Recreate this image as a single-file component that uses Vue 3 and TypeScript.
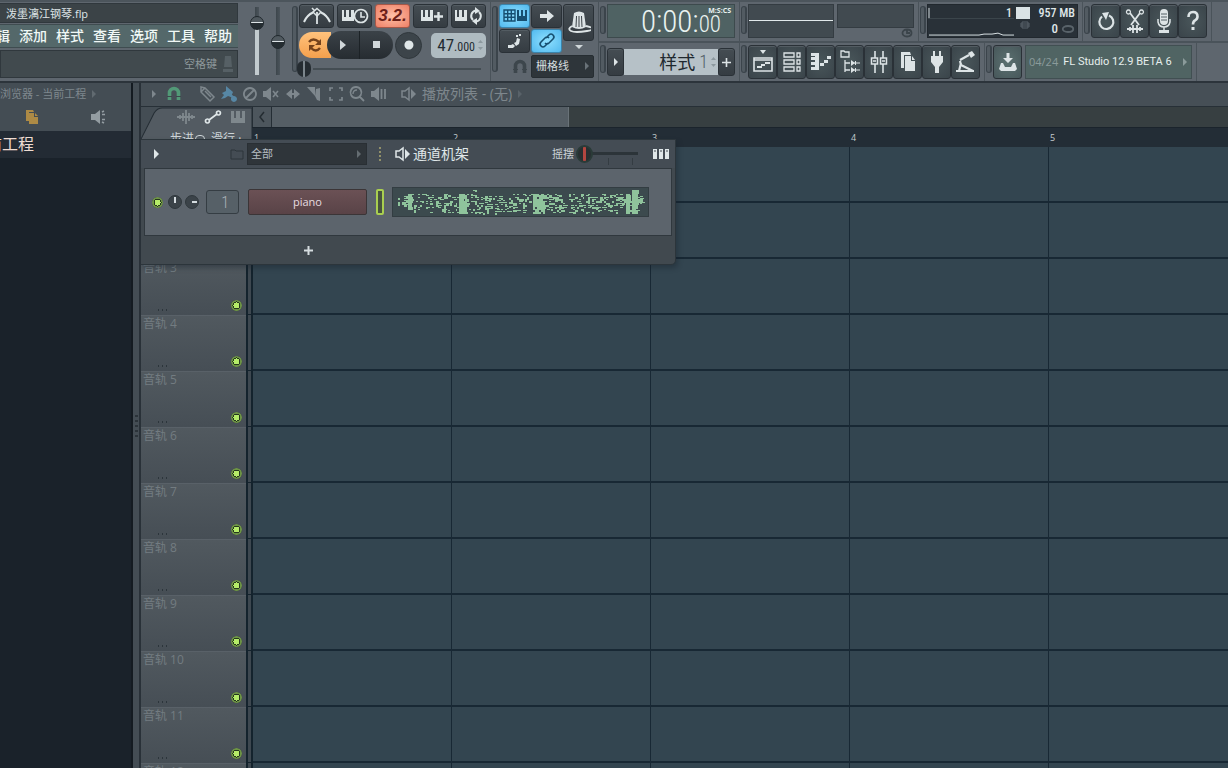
<script setup lang="ts">
import { computed, h, ref } from 'vue'

type Part = { d: string; w?: number; c?: string }
type IconDef = { s: [number, number]; p: Part[] }

const icons: Record<string, IconDef> = {
  metronome: { s: [30, 18], p: [{ d: 'M2 15Q5 8 11 5.500M28 15Q25 8 19 5.500', w: 2 }, { d: 'M15 5v12', w: 1.8 }, { d: 'M15 1.500l4 3.500-4 4-4-4z', w: 1.5 }, { d: 'M10 1l3 3', w: 1.5 }] },
  keysClock: { s: [30, 18], p: [{ d: 'M2 3h2v7h2V3h3v7h2V3h3v11H2z' }, { d: 'M21 2.500a6.500 6.500 0 1 1-.1 0zM21 5v5h4', w: 1.6 }] },
  keysPlus: { s: [30, 18], p: [{ d: 'M5 3h2v7h2V3h3v7h2V3h3v11H5z' }, { d: 'M22.500 5v9M18 9.500h9', w: 2.4 }] },
  keysLoop: { s: [30, 18], p: [{ d: 'M1 3h2v7h2V3h3v7h2V3h3v11H1z' }, { d: 'M19 13a5.500 5.500 0 0 1 3-9.500M25 5a5.500 5.500 0 0 1-3 9.500', w: 2 }, { d: 'M21 0l5 4-5 3zM23 18l-5-4 5-3z' }] },
  loop: { s: [18, 18], p: [{ d: 'M3 6Q7 1 13 6M14 12Q10 17 5 12', w: 2.4 }, { d: 'M15 3v6H9zM3 15V9h6z' }] },
  play: { s: [10, 12], p: [{ d: 'M2 1l6 5-6 5z' }] },
  stop: { s: [10, 10], p: [{ d: 'M1 1h7v7H1z' }] },
  record: { s: [12, 12], p: [{ d: 'M6 1.500a4.500 4.500 0 1 1-.1 0z' }] },
  gridKeys: { s: [26, 16], p: [{ d: 'M2 2h11v11H2zM2 5.700h11M2 9.300h11M5.700 2v11M9.300 2v11', w: 1.4 }, { d: 'M15 2h2v6h2V2h2v6h2V2h2v11H15z' }] },
  arrow: { s: [18, 14], p: [{ d: 'M2 5h7V1l7 6-7 6V9H2z' }] },
  step: { s: [20, 16], p: [{ d: 'M3 12h3l2-1 2 2-2 2H3zM9 10l2-1 1-4 3 1-1 5-3 2zM11 2h2v2h-2zM14 1h2v2h-2z' }] },
  link: { s: [20, 20], p: [{ d: 'M9 7l3-3q2-2 4 0t0 4l-4 4q-2 2-4 0M11 12l-3 3q-2 2-4 0t0-4l4-4q2-2 4 0', w: 1.6 }] },
  hat: { s: [24, 26], p: [{ d: 'M7 3q5-3 10 0l2 14q-7 4-14 0z' }, { d: 'M5 16Q0 19 4 21t16 0-1-5', w: 1.8 }, { d: 'M9.500 6L9 17M12 6v11M14.500 6l.5 11', w: 1, c: '#3a4147' }] },
  magnet: { s: [16, 15], p: [{ d: 'M3.500 14V7a4.500 4.500 0 0 1 9 0v7', w: 3.6 }, { d: 'M1 10.500h5M10 10.500h5', w: 1, c: '#3d464c' }] },
  playlist: { s: [20, 26], p: [{ d: 'M7 1h6l-3 4z' }, { d: 'M1 9h18v13H1zM1 11h18', w: 1.6 }, { d: 'M4 17h5v2H4zM8 15h4v2H8zM12 13h5v2h-5z' }] },
  rack: { s: [20, 26], p: [{ d: 'M2 4h10v4H2zM2 11h10v4H2zM2 18h10v4H2zM15 4h3v4h-3zM15 11h3v4h-3zM15 18h3v4h-3z', w: 1.3 }] },
  pianoRoll: { s: [22, 26], p: [{ d: 'M1 4h8v17H1v-3h4v-2H1v-3h4v-2H1V8h4V7H1zM10 14h4v3h-4zM14 11h4v3h-4zM17 7h4v3h-4z' }] },
  browser: { s: [22, 26], p: [{ d: 'M2 2h3l1 1h4v5H2zM6 11v12M6 14h5M6 21h5', w: 1.3 }, { d: 'M12 11l4 3-4 3zM12 18l4 3-4 3zM16 12h1v4h-1zM16 19h1v4h-1z' }, { d: 'M13 14h8M13 21h8', w: 1.2 }] },
  mixer: { s: [18, 26], p: [{ d: 'M5 2v7M5 15v9M13 2v7M13 15v9', w: 1.6 }, { d: 'M1.500 9h6v6h-6zM10.500 9h6v6h-6z', w: 1.5 }, { d: 'M3 12h3M12 12h3', w: 1.3 }] },
  docs: { s: [18, 22], p: [{ d: 'M2 1h9l1 3H5v13H2z' }, { d: 'M6 5h6v5h4v10H6z' }, { d: 'M13 5l3 4h-3z' }] },
  plug: { s: [18, 24], p: [{ d: 'M5 1h2v5h4V1h2v5h2v6l-4 5v6H7v-6l-4-5V6h2z' }] },
  robot: { s: [24, 26], p: [{ d: 'M14 4l4-2 3 4-4 3z' }, { d: 'M6 11l9-5M6 12l1 4M7 16l12 6M7 14l-2 8', w: 2.2 }, { d: 'M2 21h18v2H2z' }] },
  power: { s: [20, 20], p: [{ d: 'M6 5.500A7 7 0 1 0 13 4.500', w: 2.2 }, { d: 'M6 2l7-1-3 8z' }] },
  scissors: { s: [20, 26], p: [{ d: 'M5 5l9 12M15 5L6 17', w: 1.8 }, { d: 'M3.500 2a2 2 0 1 1-.1 0zM16.500 2a2 2 0 1 1-.1 0z', w: 1.3 }, { d: 'M2 21h16M5 19v4M8 17v8M12 17v8M15 19v4', w: 1.8 }] },
  mic: { s: [16, 26], p: [{ d: 'M4 5q0-4 4-4t4 4v8q0 4-4 4t-4-4zM3 22h10v3H3z' }, { d: 'M2 11v3q1 5 6 5t6-5v-3M8 19v4', w: 1.5 }, { d: 'M5 6h6M5 9h6M5 12h6', w: 0.9, c: '#46545a' }] },
  help: { s: [16, 22], p: [{ d: 'M3.500 7q0-5 4.500-5t4.500 4.500q0 2.500-2.500 4-2 1-2 4', w: 2.6 }, { d: 'M6.500 17h3v3h-3z' }] },
  download: { s: [20, 22], p: [{ d: 'M8.500 2h3v5H15l-5 5-5-5h3.500z' }, { d: 'M3 12h2l2 4h6l2-4h2l2 6-2 2H3l-2-2z' }] },
  pencil: { s: [18, 18], p: [{ d: 'M3 2l4 1 9 9-4 4-9-9zM7 6l6 6M7 3L3 7', w: 1.5 }] },
  brush: { s: [18, 18], p: [{ d: 'M6 1l7 6-2 5-3-1-3 2-4 1 3-4-2-2 4-2z' }, { d: 'M9 9l5 4', w: 2.4 }, { d: 'M14 11a3 3 0 1 1-.1 0z' }] },
  ban: { s: [16, 16], p: [{ d: 'M8 2a6 6 0 1 1-.1 0zM12 4l-8 8', w: 1.8 }] },
  mute: { s: [18, 16], p: [{ d: 'M1 5h3l5-4v14l-5-4H1z' }, { d: 'M11 5l5 6M16 5l-5 6', w: 1.6 }] },
  slip: { s: [18, 14], p: [{ d: 'M2 7l6-5v10zM16 7l-6-5v10z' }, { d: 'M5 7h8', w: 2 }] },
  slice: { s: [18, 16], p: [{ d: 'M1 1h8v9z' }, { d: 'M10 3l4-1v13l-3-1-2-4z' }] },
  select: { s: [16, 16], p: [{ d: 'M2 5V2h3M11 2h3v3M14 11v3h-3M5 14H2v-3', w: 1.7 }] },
  zoom: { s: [18, 18], p: [{ d: 'M8 2a5.500 5.500 0 1 1-.1 0zM12 12l4 4', w: 1.8 }, { d: 'M5 9q0-4 4-4', w: 1.3 }] },
  speaker: { s: [18, 16], p: [{ d: 'M1 5h3l5-4v14l-5-4H1z' }, { d: 'M11.500 3v10M15 3v10', w: 1.8 }] },
  channel: { s: [18, 16], p: [{ d: 'M2 5h3l4-3v12l-4-3H2z', w: 1.5 }, { d: 'M11 3l5 5-5 5z' }] },
  wave: { s: [20, 14], p: [{ d: 'M1 7h18M4 5v4M7 3v8M10 0v14M13 3v8M16 5v4', w: 1.8 }] },
  nodes: { s: [18, 16], p: [{ d: 'M5 11l8-6M3.500 10a2 2 0 1 1-.1 0zM14.500 2a2 2 0 1 1-.1 0z', w: 1.7 }] },
  keys: { s: [16, 14], p: [{ d: 'M1 1h3v7h2V1h4v7h2V1h3v12H1z' }] },
  files: { s: [14, 16], p: [{ d: 'M1 1h7l1 2H4v9H1z' }, { d: 'M4 4h5v4h4v7H4z' }, { d: 'M10 4l3 3h-3z' }] },
  horn: { s: [16, 16], p: [{ d: 'M1 5h4l5-4v14l-5-4H1z' }, { d: 'M12 3l2-1M12 13l2 1M12 5.500h3M12 10.500h3', w: 1.6 }] },
  folder: { s: [14, 12], p: [{ d: 'M1 2h4l1 1h7v8H1z', w: 1 }] },
  steps: { s: [16, 12], p: [{ d: 'M0 1h4v10H0zM6 1h4v10H6zM12 1h4v10h-4z' }, { d: 'M1 3h2M7 3h2M13 3h2', w: 1, c: '#444c54' }] },
  eye: { s: [14, 10], p: [{ d: 'M7 2c7 0 7 6 0 6s-7-6 0-6z', w: 1.8 }] },
  dial: { s: [14, 10], p: [{ d: 'M7 1.500c6 0 6 7 0 7s-6-7 0-7zM7 1v4h3', w: 1.8 }] },
  chip: { s: [10, 8], p: [{ d: 'M2 1h6v6H2zM0 3h10M0 5h10', w: 1 }] },
  lamp: { s: [12, 18], p: [{ d: 'M3 1h6l1 11H2zM1 14h10v3H1z' }] },
}

const Icon = (props: { name: string }) => {
  const def = icons[props.name]
  const [w, hgt] = def.s
  return h('svg', { width: w, height: hgt, viewBox: `0 0 ${w} ${hgt}`, class: 'icon', 'aria-hidden': 'true' },
    def.p.map((p) => h('path', p.w
      ? { d: p.d, fill: 'none', stroke: p.c ?? 'currentColor', 'stroke-width': p.w }
      : { d: p.d, fill: p.c ?? 'currentColor' })))
}
Icon.props = ['name']

const menus = ['编辑', '添加', '样式', '查看', '选项', '工具', '帮助']
const windows = [
  ['playlist', '播放列表'], ['rack', '通道机架'], ['pianoRoll', '钢琴卷帘'], ['browser', '浏览器'],
  ['mixer', '混音器'], ['docs', '样式选择'], ['plug', '插件'], ['robot', '触控'],
]
const utilities = [['power', '撤消'], ['scissors', '编辑音频'], ['mic', '录音'], ['help', '帮助']]
const tools = ['pencil', 'brush', 'ban', 'mute', 'slip', 'slice', 'select', 'zoom', 'speaker']
const tracks = Array.from({ length: 12 }, (_, i) => i + 1)
const bars = [1, 2, 3, 4, 5]

const volume = ref(83)
const pitch = ref(48)
const position = ref(0)
const swing = ref(0)

const notePath = computed(() => {
  let seed = 71
  const rnd = () => {
    seed = (seed + 0x6d2b79f5) | 0
    let t = Math.imul(seed ^ (seed >>> 15), 1 | seed)
    t = (t + Math.imul(t ^ (t >>> 7), 61 | t)) ^ t
    return ((t ^ (t >>> 14)) >>> 0) / 4294967296
  }
  const dense = (x: number) =>
    (x > 14 && x < 19) || (x > 66 && x < 74) || (x > 140 && x < 152) || (x > 234 && x < 238) || (x > 240 && x < 247)
  let d = ''
  for (let x = 5; x < 252; x += 2) {
    const edge = x < 14 || x > 248
    const raised = (x > 78 && x < 86) || (x > 167 && x < 173) || x > 238
    const top = edge ? 9 : raised ? 2 : x > 90 && x < 120 ? 9 : 6
    const bottom = edge ? 20 : x < 20 ? 23 : 28
    for (let y = top; y < bottom; y += 2) {
      const full = dense(x)
      const chance = full ? 0.95 : y > 22 || y < 9 ? 0.3 : 0.45
      if (rnd() < chance) {
        const w = rnd() > 0.75 ? 3 : 2
        d += `M${x} ${y}h${w}v${full || rnd() > 0.55 ? 2 : 1}h-${w}z`
      }
    }
  }
  return d
})
</script>

<template>
  <div class="daw">
    <header class="toolbar">
      <section class="title-block">
        <div class="file-name">泼墨漓江钢琴.flp</div>
        <nav class="menu"><a v-for="m in menus" :key="m" href="#">{{ m }}</a></nav>
        <div class="hint"><span>空格键</span><Icon name="lamp" /></div>
      </section>

      <section class="main-sliders">
        <input v-model="volume" class="vertical volume" type="range" aria-label="主音量" />
        <input v-model="pitch" class="vertical" type="range" aria-label="主音高" />
      </section>

      <section class="panel transport">
        <i class="grip tall"></i>
        <div class="stack">
          <div class="row modes">
            <button class="btn" aria-label="节拍器"><Icon name="metronome" /></button>
            <button class="btn" aria-label="等待输入"><Icon name="keysClock" /></button>
            <button class="btn lit-red" aria-label="倒数">3.2.</button>
            <button class="btn" aria-label="叠加录音"><Icon name="keysPlus" /></button>
            <button class="btn" aria-label="循环录音"><Icon name="keysLoop" /></button>
          </div>
          <div class="row play-row">
            <button class="loop" aria-label="样式模式"><Icon name="loop" /></button>
            <button class="play" aria-label="播放"><Icon name="play" /></button>
            <button class="stop" aria-label="停止"><Icon name="stop" /></button>
            <button class="record" aria-label="录制"><Icon name="record" /></button>
            <div class="tempo"><b>47</b><small>.000</small><i class="updown"></i></div>
          </div>
          <input v-model="position" class="position" type="range" aria-label="播放位置" />
        </div>
      </section>

      <section class="panel shortcuts">
        <i class="grip tall"></i>
        <div class="stack">
          <div class="pads">
            <button class="btn lit-blue" aria-label="键盘输入"><Icon name="gridKeys" /></button>
            <button class="btn" aria-label="自动滚动"><Icon name="arrow" /></button>
            <button class="btn" aria-label="步进编辑"><Icon name="step" /></button>
            <button class="btn lit-blue" aria-label="控制器链接"><Icon name="link" /></button>
            <div class="hat"><button class="btn" aria-label="旋钮"><Icon name="hat" /></button><i class="down"></i></div>
          </div>
          <div class="snap">
            <Icon name="magnet" />
            <select aria-label="吸附"><option>栅格线</option></select>
            <i class="tri"></i>
          </div>
        </div>
      </section>

      <div class="rows">
        <div class="row">
          <section class="panel">
            <i class="grip"></i>
            <div class="time"><span>0:00:</span><small>00</small><em>M:S:CS</em></div>
          </section>
          <section class="panel">
            <i class="grip"></i>
            <div class="scopes">
              <div class="scope"></div>
              <div class="peak"><div class="meter"></div><Icon name="dial" /></div>
            </div>
          </section>
          <section class="panel">
            <i class="grip"></i>
            <div class="memory">
              <svg class="cpu" viewBox="0 0 86 33" preserveAspectRatio="none" aria-hidden="true">
                <path d="M1 3v11M1 31h50l5-1h8l6-1 5 2h11" fill="none" stroke="#d9e2e5" />
                <path d="M0 14h86" stroke="#3d474d" />
              </svg>
              <div class="stats">
                <span>1</span><i class="square"></i><span>957 MB</span>
                <Icon name="chip" /><span class="zero">0 <Icon name="eye" /></span>
              </div>
            </div>
          </section>
          <section class="panel">
            <i class="grip"></i>
            <button v-for="[icon, label] in utilities" :key="icon" class="btn tile" :aria-label="label"><Icon :name="icon" /></button>
          </section>
        </div>
        <div class="row">
          <section class="panel">
            <i class="grip"></i>
            <div class="pattern">
              <button class="btn" aria-label="样式菜单"><i class="tri"></i></button>
              <div class="pattern-name">样式<span>1</span><i class="updown"></i></div>
              <button class="btn" aria-label="新建样式"><svg width="9" height="9" viewBox="0 0 9 9"><path d="M4.500 0v9M0 4.500h9" stroke="#dde4e6" stroke-width="1.600" /></svg></button>
            </div>
          </section>
          <section class="panel">
            <i class="grip"></i>
            <button v-for="[icon, label] in windows" :key="icon" class="btn tile" :aria-label="label"><Icon :name="icon" /></button>
          </section>
          <section class="panel">
            <i class="grip"></i>
            <button class="btn tile download" aria-label="下载"><Icon name="download" /></button>
            <div class="news"><span>04/24</span><a href="#">FL Studio 12.9 BETA 6</a><i class="tri"></i></div>
          </section>
        </div>
      </div>
    </header>

    <main class="workspace">
      <aside class="browser">
        <div class="browser-head">
          <div class="browser-title">浏览器 - 当前工程<i class="tri"></i></div>
          <div class="browser-tabs"><Icon name="files" /><Icon name="horn" /></div>
        </div>
        <div class="browser-item"><span>当前工程</span></div>
      </aside>
      <div class="splitter"><i></i></div>

      <section class="playlist">
        <div class="playlist-bar">
          <i class="tri"></i>
          <Icon name="magnet" class="green" />
          <div class="tools"><Icon v-for="t in tools" :key="t" :name="t" :class="t" /></div>
          <Icon name="channel" />
          <span class="playlist-title">播放列表 - (无)</span>
          <i class="tri dim"></i>
        </div>
        <div class="playlist-head">
          <div class="corner">
            <svg class="corner-shape" viewBox="0 0 110 40" preserveAspectRatio="none" aria-hidden="true">
              <path d="M0 32L13 6Q16 1 21 1H110V40H0z" fill="#535b62" stroke="#242d34" />
            </svg>
            <div class="corner-tabs"><Icon name="wave" /><Icon name="nodes" class="on" /><Icon name="keys" /></div>
            <div class="corner-labels">步进<i></i><span>滑行 ·</span></div>
          </div>
          <div class="timeline">
            <div class="scroll"><button aria-label="向左滚动"><svg width="8" height="12" viewBox="0 0 8 12"><path d="M6 1L2 6l4 5" fill="none" stroke="#242c32" stroke-width="1.500" /></svg></button><div class="scroll-thumb"></div></div>
            <div class="ruler"><span v-for="b in bars" :key="b">{{ b }}</span></div>
          </div>
        </div>
        <div class="tracks">
          <div v-for="t in tracks" :key="t" class="track">
            <div class="track-head"><span>音轨 {{ t }}</span><i class="dots"></i><button class="led" :aria-label="'静音音轨 ' + t"></button></div>
            <div class="gutter"></div>
            <div class="lane"></div>
          </div>
        </div>

        <section class="rack-window">
          <div class="rack-bar">
            <i class="tri bright"></i>
            <Icon name="folder" />
            <div class="filter"><select aria-label="通道过滤"><option>全部</option></select><i class="tri"></i></div>
            <i class="sep"></i>
            <Icon name="channel" class="bright-icon" />
            <h2>通道机架</h2>
            <label for="swing">摇摆</label>
            <input id="swing" v-model="swing" type="range" />
            <Icon name="steps" class="steps" />
          </div>
          <div class="channel">
            <button class="led" aria-label="通道开关"></button>
            <i class="knob pan"></i>
            <i class="knob vol"></i>
            <div class="route">1</div>
            <button class="channel-name">piano</button>
            <button class="selector" aria-label="选择通道"></button>
            <svg class="notes" viewBox="0 0 257 30" preserveAspectRatio="none" shape-rendering="crispEdges" aria-hidden="true"><path :d="notePath" fill="#8fc49c" /></svg>
          </div>
          <button class="add" aria-label="添加通道"><svg width="9" height="9" viewBox="0 0 9 9"><path d="M4.500 0v9M0 4.500h9" stroke="#d5dcdf" stroke-width="2" /></svg></button>
        </section>
      </section>
    </main>
  </div>
</template>

<style>
html, body { margin: 0; height: 100%; }
body { overflow: hidden; }
#app { height: 100%; }
</style>

<style scoped>
* { box-sizing: border-box; }
button, input, select { margin: 0; padding: 0; border: 0; font: inherit; color: inherit; }
a { color: inherit; text-decoration: none; }
i, em { font-style: normal; }
.icon { display: block; flex: none; }

.daw {
  --narrow: "Roboto Condensed", Roboto, sans-serif;
  height: 100vh;
  display: flex;
  flex-direction: column;
  overflow: hidden;
  background: #1b232b;
  color: #dfe6e8;
  font: 11px/16px "Open Sans", "Noto Sans CJK SC", sans-serif;
}
.toolbar {
  flex: none;
  height: 83px;
  display: flex;
  background: #5e666e;
  border-top: 2px solid #4c555c;
  border-bottom: 2px solid #2c343b;
}
.row { display: flex; }
.title-block { flex: none; width: 238px; padding-top: 1px; overflow: hidden; }
.file-name { height: 20px; padding-left: 6px; line-height: 20px; background: #3b4347; border: 1px solid #30383d; border-left-width: 0; }
.menu {
  height: 24px;
  margin: 1px 0 2px;
  padding-right: 6px;
  display: flex;
  justify-content: flex-end;
  gap: 9px;
  background: #54686a;
  border: solid #3f4c50;
  border-width: 1px 0;
  font-size: 14px;
  font-weight: 500;
  line-height: 22px;
  color: #f0f8f6;
  white-space: nowrap;
}
.menu a { flex: none; }
.hint { height: 28px; padding-right: 3px; display: flex; align-items: center; justify-content: flex-end; gap: 5px; background: #414a4e; border: 1px solid #30383d; color: #8e989b; }
.hint .icon { color: #566065; }

.main-sliders { flex: none; width: 53px; padding: 5px 0 4px 11px; display: flex; gap: 5px; }
.vertical { appearance: none; writing-mode: vertical-lr; direction: rtl; width: 16px; height: 68px; background: linear-gradient(90deg, transparent 6px, #3d464c 6px, #4b545b 10px, transparent 10px); }
.volume { background: linear-gradient(90deg, transparent 6px, #c3cbcf 6px, #c3cbcf 10px, transparent 10px) 0 20px / 16px 48px no-repeat, linear-gradient(90deg, transparent 6px, #3d464c 6px, #4b545b 10px, transparent 10px); }
.vertical::-webkit-slider-thumb { appearance: none; width: 14px; height: 14px; border-radius: 50%; border: 1px solid #20282d; background: linear-gradient(#50595f 40%, #dce3e6 40%, #dce3e6 54%, #252d32 54%); }

.panel { flex: none; display: flex; align-items: flex-start; padding-right: 4px; border: solid #4a535a; border-width: 0 1px 0 0; }
.grip { flex: none; width: 6px; height: 28px; margin: 4px 1px 0; border: solid #3b444b; border-width: 1px 2px 1px 1px; border-radius: 3px; background: #525b62; }
.grip.tall { height: 66px; }
.stack { display: flex; flex-direction: column; padding-top: 2px; }
.btn {
  display: flex;
  align-items: center;
  justify-content: center;
  background: linear-gradient(#454d53, #353c42);
  border: 1px solid #2a3137;
  border-radius: 3px;
  color: #dde4e6;
  box-shadow: inset 0 1px 0 #535c62;
}
.modes { gap: 3px; }
.modes .btn { width: 35px; height: 24px; }
.btn.lit-red { background: radial-gradient(#ffc0a6, #ee7f66); border-color: #a65848; color: #6b2018; font: italic bold 17px/20px "Liberation Sans", sans-serif; box-shadow: none; }
.play-row { margin-top: 3px; align-items: center; height: 28px; }
.loop { width: 32px; height: 26px; display: grid; place-items: center start; padding-left: 7px; background: linear-gradient(#ffc27c, #f4a04d); border-radius: 13px 0 0 13px; color: #74421c; }
.play, .stop { height: 28px; display: grid; place-items: center; background: linear-gradient(#3b4248, #262c31); color: #d0d7da; }
.play { width: 33px; margin-left: -4px; border-radius: 14px 0 0 14px; border-right: 1px solid #1c2226; }
.stop { width: 33px; border-radius: 0 14px 14px 0; }
.record { width: 27px; height: 27px; margin-left: 2px; display: grid; place-items: center; background: #3c444a; border: 1px solid #30373c; border-radius: 50%; }
.tempo { width: 55px; height: 25px; margin-left: auto; padding-right: 3px; display: flex; align-items: baseline; justify-content: flex-end; background: #afbbc1; border-radius: 5px; color: #242d33; font-family: var(--narrow); line-height: 25px; }
.tempo b { font-size: 17px; font-weight: normal; }
.tempo small { font-size: 12px; }
.updown { align-self: center; width: 5px; height: 10px; margin-left: 3px; background: linear-gradient(#8c989e 3px, transparent 3px, transparent 7px, #8c989e 7px); clip-path: polygon(50% 0, 100% 30%, 100% 70%, 50% 100%, 0 70%, 0 30%); }
.position { appearance: none; width: 186px; height: 20px; margin-left: -2px; background: linear-gradient(#444d53, #444d53) 16px 9px / 168px 2px no-repeat; }
.position::-webkit-slider-thumb { appearance: none; width: 14px; height: 16px; border-radius: 7px 7px 8px 8px; background: linear-gradient(90deg, #252c31 6px, #7c868c 6px, #7c868c 8px, #252c31 8px); }

.pads { display: grid; grid-template-columns: 31px 31px 31px; grid-template-rows: 24px 24px; gap: 1px; }
.hat { grid-area: 1 / 3 / 3 / 4; }
.hat .btn { width: 31px; height: 37px; }
.down { display: block; width: 0; margin: 4px auto 0; border: solid transparent; border-width: 4px 4px 0; border-top-color: #d0d7da; }
.btn.lit-blue { background: radial-gradient(#8fe0ff, #52b9ee); border-color: #3b84ab; color: #164f70; box-shadow: none; }
.snap { display: flex; align-items: center; justify-content: flex-end; gap: 3px; height: 24px; margin-top: 1px; color: #3d464c; }
.snap select { appearance: none; width: 63px; height: 23px; padding-left: 4px; background: #2e353a; border: 1px solid #262d32; border-radius: 2px; color: #d5dcdf; }
.snap .tri { margin-left: -12px; margin-right: 5px; color: #697278; }
.tri { flex: none; width: 0; height: 0; border: solid transparent; border-width: 4px 0 4px 4px; border-left-color: currentColor; }

.rows { flex: 1; min-width: 0; display: flex; flex-direction: column; }
.rows .row { height: 39px; }
.rows .row + .row { height: 40px; border-top: 2px solid #4a535a; }
.rows .row .panel { height: 100%; padding-top: 2px; }
.rows .grip { margin-top: 2px; }
.rows .row + .row .grip { margin-top: 0; }
.time { position: relative; width: 128px; height: 34px; padding-right: 13px; display: flex; align-items: baseline; justify-content: flex-end; background: #4f6263; border: 1px solid #3d4a4d; color: #e9f2f0; font-family: var(--narrow); font-weight: 300; line-height: 34px; }
.time span { font-size: 31px; }
.time small { font-size: 23px; }
.time em { position: absolute; top: 1px; right: 3px; font: bold 7px/9px "Open Sans", sans-serif; }
.scopes { width: 166px; display: flex; gap: 3px; }
.scope { flex: 1; height: 34px; background: linear-gradient(#e2e9eb, #e2e9eb) 0 15px / 100% 1px no-repeat #414a50; border: 1px solid #343c42; }
.peak { width: 77px; color: #3b444a; }
.meter { height: 24px; background: #414a50; border: 1px solid #343c42; }
.peak .icon { margin: 0 0 0 auto; }
.memory { width: 151px; height: 34px; display: flex; background: #293138; border: 1px solid #21282e; }
.cpu { width: 86px; height: 32px; margin-right: -12px; }
.stats { flex: 1; padding-right: 2px; display: grid; grid-template-columns: 10px 14px 1fr; grid-template-rows: 16px 16px; column-gap: 4px; align-items: center; justify-items: end; font: 500 12px/16px var(--narrow); white-space: nowrap; }
.square { width: 14px; height: 12px; background: #d9e2e5; }
.stats > .icon { grid-column: 2; align-self: start; color: #59636a; }
.zero { display: flex; align-items: center; gap: 3px; font-size: 13px; }
.zero .icon { color: #59636a; }
.tile { width: 29px; height: 34px; background: radial-gradient(#49565a, #3a444a); }
.pattern { display: flex; align-items: center; width: 128px; height: 34px; }
.pattern .btn { width: 17px; height: 28px; }
.pattern-name { flex: 1; height: 26px; padding-right: 2px; display: flex; align-items: center; justify-content: flex-end; background: #b6c1c7; color: #20282e; font-size: 18px; line-height: 26px; }
.pattern-name span { margin-left: 4px; color: #535f67; font-family: var(--narrow); font-weight: 300; }
.download { background: radial-gradient(#5b7070, #47575a); }
.news { width: 167px; height: 34px; margin-left: 3px; padding: 0 4px 0 3px; display: flex; align-items: center; gap: 5px; background: #506463; border: 1px solid #414f52; color: #8b9b9b; white-space: nowrap; }
.news a { color: #e6efed; font-family: Roboto, sans-serif; }
.news .tri { margin-left: auto; }

.workspace { flex: 1; min-height: 0; display: flex; }
.browser { flex: none; width: 133px; background: #1a222a; border-right: 2px solid #141b21; }
.browser-head { height: 48px; background: #444d54; color: #7f888e; }
.browser-title { height: 22px; display: flex; align-items: center; gap: 6px; white-space: nowrap; }
.browser-title .tri { color: #616a70; }
.browser-tabs { display: flex; align-items: center; gap: 51px; padding: 4px 0 0 25px; color: #949da2; }
.browser-tabs .icon:first-child { color: #ad8a45; }
.browser-item { height: 27px; width: 100%; background: #232b34; color: #eedcd2; font-size: 16px; line-height: 26px; overflow: hidden; }
.browser-item span { display: flex; justify-content: flex-end; width: 34px; white-space: nowrap; }
.splitter { flex: none; width: 8px; display: flex; align-items: center; justify-content: center; background: #444d54; border-right: 2px solid #293138; }
.splitter i { width: 3px; height: 22px; background: repeating-linear-gradient(#2b3339 0 2px, transparent 2px 5px); }

.playlist { position: relative; flex: 1; min-width: 0; display: flex; flex-direction: column; overflow: hidden; }
.playlist-bar { flex: none; height: 23px; padding: 0 0 2px 11px; display: flex; align-items: center; background: #464f56; color: #7e878d; font-size: 14px; }
.playlist-bar .green { margin: 0 16px 0 10px; color: #529977; }
.tools { display: flex; align-items: center; gap: 4px; margin-right: 12px; }
.tools .icon.brush { color: #5787a5; }
.playlist-title { margin: 0 6px 0 4px; white-space: nowrap; }
.dim { color: #596269; }
.playlist-head { flex: none; height: 41px; display: flex; background: #444d54; border-top: 1px solid #273037; }
.corner { position: relative; width: 111px; height: 40px; }
.corner-shape { position: absolute; inset: 0; width: 100%; height: 100%; }
.corner-tabs { position: relative; display: flex; gap: 8px; align-items: center; height: 20px; padding-left: 35px; color: #7f888d; }
.corner-tabs .on { color: #dfe6e8; }
.corner-labels { position: relative; display: flex; align-items: center; padding: 4px 0 0 29px; color: #cdd4d7; font-size: 12px; line-height: 16px; }
.corner-labels i { width: 10px; height: 8px; margin: 0 6px 0 1px; border: 1px solid; border-radius: 4px; }
.timeline { flex: 1; min-width: 0; }
.scroll { height: 20px; display: flex; background: #373f41; }
.scroll button { width: 20px; display: grid; place-items: center; background: #4d565d; border: solid #242d34; border-width: 0 1px; }
.scroll-thumb { width: 297px; background: #555e65; border-right: 1px solid #697278; }
.ruler { height: 20px; display: flex; overflow: hidden; background: #232d36; border-top: 1px solid #1b242c; color: #c4cccf; font-size: 9px; line-height: 20px; }
.ruler span { flex: none; width: 199px; padding-left: 2px; }
.tracks { flex: 1; min-height: 0; overflow: hidden; }
.track { display: flex; height: 56px; }
.track-head { position: relative; width: 105px; padding: 0 2px; background: linear-gradient(#51595f, #464e55); border-top: 1px solid #596168; color: #737c81; font-size: 12px; line-height: 16px; }
.dots { display: block; width: 10px; height: 2px; margin: 33px 0 0 15px; background: repeating-linear-gradient(90deg, #2c353b 0 1px, transparent 1px 4px); }
.led { position: absolute; right: 4px; bottom: 4px; width: 11px; height: 11px; border-radius: 50%; background: radial-gradient(#b5ec68 0 3px, #26381f 3px 4px, #6d9444 4px 5px, #3c4a35 6px); }
.gutter { width: 7px; background: #3e4850; border: solid #14232d; border-width: 0 2px; border-bottom: 1px solid #14232d; }
.lane { flex: 1; border-bottom: 2px solid #182834; background: repeating-linear-gradient(90deg, #334550 0 198px, #182834 198px 199px); }

.rack-window { position: absolute; left: 0; top: 56px; width: 535px; background: #41494f; border: 1px solid #2c353b; border-left-width: 0; border-radius: 0 0 5px 0; box-shadow: 2px 3px 5px #16202a66; }
.rack-bar { height: 28px; padding: 0 6px 0 13px; display: flex; align-items: center; background: #444c54; }
.rack-bar > .icon:not(.bright-icon, .steps) { margin: 0 3px 0 71px; color: #2c353b; }
.bright { color: #e0e7e9; border-width: 5px 0 5px 5px; }
.filter { display: flex; align-items: center; width: 120px; height: 22px; padding-right: 5px; background: #2f353a; border: 1px solid #292f34; color: #646c71; }
.filter select { appearance: none; flex: 1; height: 20px; padding-left: 3px; background: transparent; color: #b6bec2; }
.sep { width: 2px; height: 14px; margin: 0 13px 0 12px; background: repeating-linear-gradient(#919069 0 2px, transparent 2px 4px); }
.bright-icon { color: #dfe6e8; }
.rack-bar h2 { margin: 0 auto 0 1px; font-size: 14px; font-weight: 400; line-height: 20px; }
.rack-bar label { color: #ccd3d6; margin-right: 2px; }
.rack-bar input { appearance: none; width: 62px; height: 22px; margin-right: 15px; background: linear-gradient(#2c3439, #2c3439) 14px 9px / 48px 3px no-repeat, linear-gradient(#343c42, #343c42) 32px 15px / 1px 7px no-repeat, linear-gradient(#343c42, #343c42) 56px 15px / 1px 7px no-repeat; }
.rack-bar input::-webkit-slider-thumb { appearance: none; width: 17px; height: 18px; border-radius: 50%; background: linear-gradient(90deg, #282f31 5px, #b34640 5px, #b34640 8px, #282f31 8px); border: 2px solid #2a3b38; }
.steps { color: #e0e7e9; }
.channel { height: 68px; margin: 0 3px; padding-left: 7px; display: flex; align-items: center; background: #5c646c; border: 1px solid #30383e; }
.channel .led { position: static; margin-right: 5px; }
.knob { width: 14px; height: 14px; margin-right: 3px; border-radius: 50%; border: 1px solid #30383d; background: linear-gradient(#d5dce0, #d5dce0) 5px 1px / 2px 6px no-repeat, #3b4349; }
.vol { background: linear-gradient(#d5dce0, #d5dce0) 6px 5px / 5px 2px no-repeat, #3b4349; margin-right: 7px; }
.route { width: 33px; height: 24px; padding-right: 9px; border: 1px solid #353d43; border-radius: 3px; background: #566067; color: #aab2b7; font: 300 16px/23px var(--narrow); text-align: right; }
.channel-name { width: 119px; height: 26px; margin-left: 9px; background: linear-gradient(#6b5155, #594347); border: 1px solid #3b3537; border-radius: 2px; color: #e7dde0; }
.selector { width: 8px; height: 26px; margin: 0 8px 0 9px; border: 2px solid #a9cf50; border-radius: 2px; background: #48533f; }
.notes { width: 257px; height: 30px; background: #3c4a4e; border: 1px solid #333d42; }
.add { display: grid; place-items: center; width: 100%; height: 28px; padding-right: 200px; background: transparent; }
</style>
